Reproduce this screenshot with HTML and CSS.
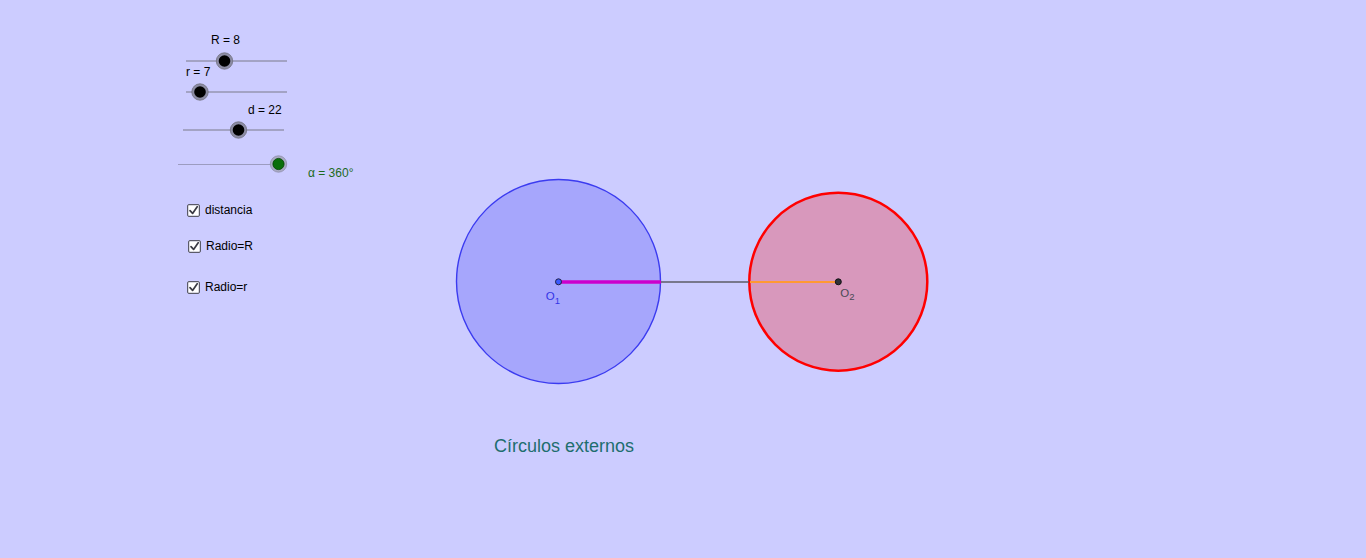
FILE: index.html
```html
<!DOCTYPE html>
<html lang="es">
<head>
<meta charset="utf-8">
<title>Círculos externos</title>
<link rel="stylesheet" href="styles.css">
</head>
<body>
<div class="applet">
  <svg class="board" width="1366" height="558" viewBox="0 0 1366 558" xmlns="http://www.w3.org/2000/svg">
    <!-- sliders -->
    <line class="track" x1="186" y1="61" x2="287" y2="61"/>
    <circle class="knob-ring" cx="224.5" cy="61" r="8.2"/>
    <circle class="knob" cx="224.5" cy="61" r="5.8"/>
    <text class="lbl" x="211" y="44">R = 8</text>

    <line class="track" x1="186" y1="92" x2="287" y2="92"/>
    <circle class="knob-ring" cx="200" cy="92" r="8.2"/>
    <circle class="knob" cx="200" cy="92" r="5.8"/>
    <text class="lbl" x="186" y="76">r = 7</text>

    <line class="track" x1="183" y1="130" x2="284" y2="130"/>
    <circle class="knob-ring" cx="238.5" cy="130" r="8.2"/>
    <circle class="knob" cx="238.5" cy="130" r="5.8"/>
    <text class="lbl" x="248" y="114">d = 22</text>

    <line class="track-light" x1="178" y1="164.5" x2="279" y2="164.5"/>
    <circle class="knob-ring-light" cx="278.5" cy="164" r="8.2"/>
    <circle class="knob-green" cx="278.5" cy="164" r="5.6"/>
    <text class="lbl lbl-green" x="308" y="177">α = 360°</text>

    <!-- circles -->
    <circle class="c-blue" cx="558.5" cy="281.5" r="102"/>
    <circle class="c-red" cx="838.3" cy="281.7" r="89"/>

    <!-- segments -->
    <line class="seg-gray" x1="660" y1="282" x2="749" y2="282"/>
    <line class="seg-magenta" x1="559" y1="282" x2="661" y2="282"/>
    <line class="seg-orange" x1="750" y1="282" x2="838" y2="282"/>

    <!-- points -->
    <circle class="pt-blue" cx="558.5" cy="281.8" r="3"/>
    <circle class="pt-dark" cx="838.3" cy="281.8" r="3"/>
    <text class="pt-lbl pt-lbl-blue" x="545.8" y="300">O<tspan class="sub" dy="3.5">1</tspan></text>
    <text class="pt-lbl pt-lbl-dark" x="840.3" y="296.8">O<tspan class="sub" dy="3.5">2</tspan></text>

    <text class="title" x="494" y="451.5">Círculos externos</text>
  </svg>

  <label class="check c1"><span class="box"><svg width="11" height="11" viewBox="0 0 11 11"><path class="tick" d="M2 5.6 L4.6 8.4 L9.2 1.8"/></svg></span><span class="ctext">distancia</span></label>
  <label class="check c2"><span class="box"><svg width="11" height="11" viewBox="0 0 11 11"><path class="tick" d="M2 5.6 L4.6 8.4 L9.2 1.8"/></svg></span><span class="ctext">Radio=R</span></label>
  <label class="check c3"><span class="box"><svg width="11" height="11" viewBox="0 0 11 11"><path class="tick" d="M2 5.6 L4.6 8.4 L9.2 1.8"/></svg></span><span class="ctext">Radio=r</span></label>
</div>
</body>
</html>
```
FILE: styles.css
```css
html, body {
  margin: 0;
  padding: 0;
  background: #ccccff;
  overflow: hidden;
}
.applet {
  position: relative;
  width: 1366px;
  height: 558px;
  background: #ccccff;
  font-family: "Liberation Sans", Arial, sans-serif;
}
.board {
  display: block;
}
.track {
  stroke: #7a7a8a;
  stroke-width: 1;
}
.track-light {
  stroke: #9c9cc0;
  stroke-width: 1;
}
.knob-ring {
  fill: #8c8ca4;
  stroke: #70707e;
  stroke-width: 0.8;
}
.knob {
  fill: #000000;
}
.knob-ring-light {
  fill: #a9aac4;
  stroke: #8e8eaa;
  stroke-width: 0.8;
}
.knob-green {
  fill: #0a6e0a;
  stroke: #004000;
  stroke-width: 0.8;
}
.lbl {
  font-family: "Liberation Sans", Arial, sans-serif;
  font-size: 12px;
  fill: #000000;
}
.lbl-green {
  fill: #1d6a1d;
}
.c-blue {
  fill: #a6a6fc;
  stroke: #3b3bf0;
  stroke-width: 1.4;
}
.c-red {
  fill: #d898bc;
  stroke: #ff0000;
  stroke-width: 2.5;
}
.seg-gray {
  stroke: #5c5c66;
  stroke-width: 1.6;
}
.seg-magenta {
  stroke: #cc00cc;
  stroke-width: 3.5;
}
.seg-orange {
  stroke: #ff9933;
  stroke-width: 2.2;
}
.pt-blue {
  fill: #3b5bff;
  stroke: #222244;
  stroke-width: 1;
}
.pt-dark {
  fill: #303038;
  stroke: #111111;
  stroke-width: 1;
}
.pt-lbl {
  font-family: "Liberation Sans", Arial, sans-serif;
  font-size: 11.5px;
}
.pt-lbl .sub {
  font-size: 9.5px;
}
.pt-lbl-blue {
  fill: #3434e6;
}
.pt-lbl-dark {
  fill: #4a4a55;
}
.title {
  font-family: "Liberation Sans", Arial, sans-serif;
  font-size: 18px;
  fill: #1e6e6e;
}
.check {
  position: absolute;
  display: flex;
  align-items: center;
  gap: 5px;
  font-size: 12px;
  color: #000000;
  line-height: 13px;
}
.c1 { left: 187px; top: 204px; }
.c2 { left: 188px; top: 240px; }
.c3 { left: 187px; top: 281px; }
.box {
  width: 11px;
  height: 11px;
  border: 1px solid #5a5a68;
  border-radius: 2px;
  background: #ffffff;
  display: flex;
  align-items: center;
  justify-content: center;
  box-shadow: inset 0 0 0 0.5px #b0b0c0;
}
.box svg {
  display: block;
}
.tick {
  fill: none;
  stroke: #3a3a44;
  stroke-width: 1.7;
  stroke-linecap: round;
  stroke-linejoin: round;
}
.ctext {
  position: relative;
  top: 0px;
}
```
